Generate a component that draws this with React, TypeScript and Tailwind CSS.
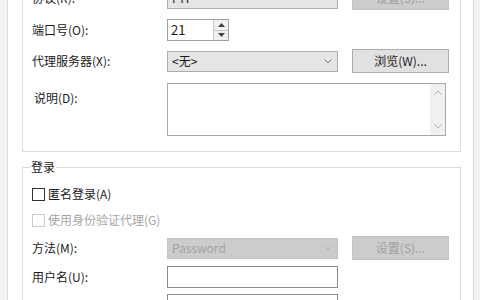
import React from "react";

function Chevron({ color = "#606060" }: { color?: string }) {
  return (
    <svg width="8" height="5" viewBox="0 0 8 5" fill="none">
      <path d="M0.5 0.5 L4 4 L7.5 0.5" stroke={color} strokeWidth="1" />
    </svg>
  );
}

function Combo({ value, disabled = false }: { value: string; disabled?: boolean }) {
  return (
    <div
      className={
        disabled
          ? "flex h-[21px] w-[171px] items-center justify-between border border-[#c4c4c4] bg-[#cccccc] pl-[4px] pr-[5px] text-[#a3a3a3]"
          : "flex h-[21px] w-[171px] items-center justify-between border border-[#adadad] bg-[#e5e5e5] pl-[4px] pr-[5px]"
      }
    >
      <span>{value}</span>
      <Chevron color={disabled ? "#b0b0b0" : "#808080"} />
    </div>
  );
}

function Button({ label, disabled = false }: { label: string; disabled?: boolean }) {
  return (
    <button
      className={
        disabled
          ? "ml-[14px] h-[24px] w-[97px] border border-[#c4c4c4] bg-[#cccccc] text-[#a0a0a0]"
          : "ml-[14px] h-[24px] w-[97px] border border-[#adadad] bg-[#e1e1e1] text-[#1b1b1b]"
      }
    >
      {label}
    </button>
  );
}

function Label({ text, className = "" }: { text: string; className?: string }) {
  return <div className={"w-[135px] shrink-0 " + className}>{text}</div>;
}

export default function App() {
  return (
    <div className="h-[300px] w-[480px] overflow-hidden bg-[#f3f3f3] font-['Microsoft_YaHei_UI','Noto_Sans_CJK_SC',sans-serif] text-[12px] leading-[16px] text-[#1b1b1b]">
      <div className="ml-[7px] mr-[6px] h-[340px] border-x border-[#dadada] bg-white pl-[14px] pr-[12px]">
        {/* Group 1: connection */}
        <div className="-mt-[40px] border border-[#dcdcdc] pb-[15px] pl-[9px] pr-[10px] pt-[25px]">
          <div className="flex h-[24px] items-center">
            <Label text="协议(R):" />
            <Combo value="FTP" />
            <Button label="设置(S)..." disabled />
          </div>

          <div className="mt-[9px] flex h-[22px] items-center">
            <Label text="端口号(O):" />
            <div className="flex h-[22px] w-[62px] border border-[#a0a0a0] bg-white">
              <div className="flex-1 pl-[3px] pt-[2px] text-[13px]">21</div>
              <div className="flex w-[15px] flex-col border-l border-[#c8c8c8]">
                <div className="flex flex-1 items-center justify-center border-b border-[#c8c8c8] bg-[#f0f0f0]">
                  <svg width="7" height="4" viewBox="0 0 7 4">
                    <path d="M0 4 L3.5 0 L7 4 Z" fill="#404040" />
                  </svg>
                </div>
                <div className="flex flex-1 items-center justify-center bg-[#f0f0f0]">
                  <svg width="7" height="4" viewBox="0 0 7 4">
                    <path d="M0 0 L3.5 4 L7 0 Z" fill="#404040" />
                  </svg>
                </div>
              </div>
            </div>
          </div>

          <div className="mt-[8px] flex h-[24px] items-center">
            <Label text="代理服务器(X):" />
            <Combo value="<无>" />
            <Button label="浏览(W)..." />
          </div>

          <div className="mt-[10px] flex items-start">
            <Label text="说明(D):" className="pl-[2px] pt-[7px]" />
            <div className="flex h-[53px] w-[279px] border border-[#a8a8a8] bg-white">
              <div className="flex-1" />
              <div className="flex w-[15px] flex-col items-center justify-between bg-[#f0f0f0] py-[6px]">
                <svg width="8" height="5" viewBox="0 0 8 5" fill="none">
                  <path d="M0.5 4.5 L4 1 L7.5 4.5" stroke="#b0b0b0" strokeWidth="1" />
                </svg>
                <Chevron color="#b0b0b0" />
              </div>
            </div>
          </div>
        </div>

        {/* Group 2: login */}
        <fieldset className="mt-[7px] border border-[#dcdcdc] pl-[9px] pr-[10px] pt-[11px]">
          <legend className="-ml-[2px] px-[1px] leading-[16px]">登录</legend>

          <div className="flex h-[16px] items-center">
            <div className="h-[13px] w-[13px] border border-[#333333] bg-white" />
            <span className="ml-[3px]">匿名登录(A)</span>
          </div>

          <div className="mt-[10px] flex h-[16px] items-center text-[#a6a6a6]">
            <div className="h-[13px] w-[13px] border border-[#cccccc] bg-white" />
            <span className="ml-[3px]">使用身份验证代理(G)</span>
          </div>

          <div className="mt-[8px] flex h-[24px] items-center">
            <Label text="方法(M):" />
            <Combo value="Password" disabled />
            <Button label="设置(S)..." disabled />
          </div>

          <div className="mt-[6px] flex h-[22px] items-center">
            <Label text="用户名(U):" />
            <div className="h-[22px] w-[171px] border border-[#8a8a8a] bg-white" />
          </div>

          <div className="mt-[6px] flex h-[22px] items-start">
            <Label text="密码(P):" className="pt-[8px]" />
            <div className="h-[22px] w-[171px] border border-[#8a8a8a] bg-white" />
          </div>
          <div className="h-[20px]" />
        </fieldset>
      </div>
    </div>
  );
}
